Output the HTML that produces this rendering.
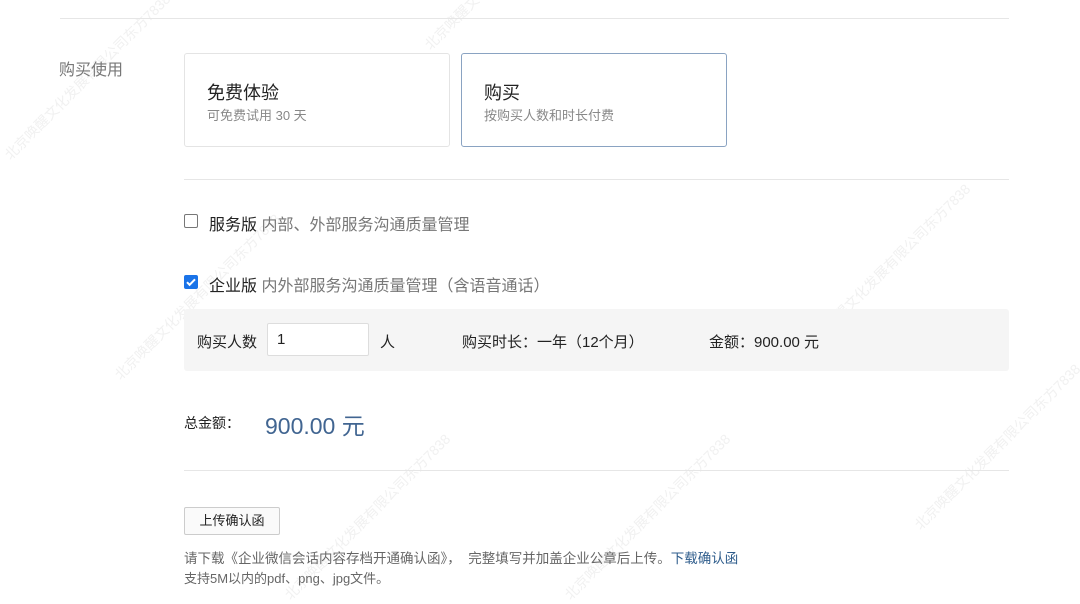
<!DOCTYPE html>
<html><head><meta charset="utf-8"><style>
*{margin:0;padding:0;box-sizing:border-box}
body{width:1080px;height:595px;background:#fff;position:relative;overflow:hidden;font-family:"Liberation Sans","Noto Sans CJK SC",sans-serif;color:#222}
.a{position:absolute;white-space:nowrap}
.hr{position:absolute;height:1px;background:#e6e6e6}
.card{position:absolute;border:1px solid #e4e4e4;border-radius:3px;background:#fff}
.wm{position:absolute;color:#f1f1f1;font-size:14px;transform:rotate(-45deg);transform-origin:left top;white-space:nowrap}
</style></head><body>
<div class="wm" style="left:420px;top:40px">北京唤醒文化发展有限公司东方7838</div>
<div class="wm" style="left:0px;top:150px">北京唤醒文化发展有限公司东方7838</div>
<div class="wm" style="left:110px;top:370px">北京唤醒文化发展有限公司东方7838</div>
<div class="wm" style="left:800px;top:340px">北京唤醒文化发展有限公司东方7838</div>
<div class="wm" style="left:280px;top:590px">北京唤醒文化发展有限公司东方7838</div>
<div class="wm" style="left:910px;top:520px">北京唤醒文化发展有限公司东方7838</div>
<div class="wm" style="left:560px;top:590px">北京唤醒文化发展有限公司东方7838</div>

<div class="hr" style="left:60px;top:18px;width:949px"></div>
<div class="a" style="left:59px;top:56px;font-size:16px;color:#777">购买使用</div>
<div class="card" style="left:184px;top:53px;width:266px;height:94px"></div>
<div class="a" style="left:207px;top:79px;font-size:18px;color:#222">免费体验</div>
<div class="a" style="left:207px;top:105px;font-size:13px;color:#888">可免费试用 30 天</div>
<div class="card" style="left:461px;top:53px;width:266px;height:94px;border-color:#8aa3c2"></div>
<div class="a" style="left:484px;top:79px;font-size:18px;color:#222">购买</div>
<div class="a" style="left:484px;top:105px;font-size:13px;color:#888">按购买人数和时长付费</div>

<div class="hr" style="left:184px;top:179px;width:825px"></div>

<div class="a" style="left:184px;top:214px;width:14px;height:14px;border:1px solid #777;border-radius:2px"></div>
<div class="a" style="left:209px;top:211px;font-size:16px;color:#222">服务版 <span style="color:#777">内部、外部服务沟通质量管理</span></div>

<div class="a" style="left:184px;top:275px;width:14px;height:14px;background:#1a73e8;border-radius:2px"><svg width="14" height="14" viewBox="0 0 14 14" style="position:absolute;left:0;top:0"><path d="M3 7.2l2.6 2.6L11 4.3" stroke="#fff" stroke-width="2" fill="none"/></svg></div>
<div class="a" style="left:209px;top:272px;font-size:16px;color:#222">企业版 <span style="color:#777">内外部服务沟通质量管理（含语音通话）</span></div>

<div class="a" style="left:184px;top:309px;width:825px;height:62px;background:#f5f5f5;border-radius:3px"></div>
<div class="a" style="left:197px;top:331px;font-size:15px">购买人数</div>
<div class="a" style="left:267px;top:323px;width:102px;height:33px;background:#fff;border:1px solid #ddd;border-radius:2px;font-size:15px;padding:7px 0 0 9px">1</div>
<div class="a" style="left:380px;top:331px;font-size:15px">人</div>
<div class="a" style="left:462px;top:331px;font-size:15px">购买时长：一年（12个月）</div>
<div class="a" style="left:709px;top:331px;font-size:15px">金额：900.00 元</div>

<div class="a" style="left:184px;top:413px;font-size:14px">总金额：</div>
<div class="a" style="left:265px;top:407px;font-size:23px;color:#416591">900.00 元</div>

<div class="hr" style="left:184px;top:470px;width:825px"></div>

<div class="a" style="left:184px;top:507px;width:96px;height:28px;border:1px solid #ccc;border-radius:2px;background:#fafafa;font-size:13px;text-align:center;line-height:26px">上传确认函</div>
<div class="a" style="left:184px;top:547px;font-size:13.5px;color:#666">请下载《企业微信会话内容存档开通确认函》，&nbsp;&nbsp;完整填写并加盖企业公章后上传。<span style="color:#2f5d8c">下载确认函</span></div>
<div class="a" style="left:184px;top:568px;font-size:13px;color:#666">支持5M以内的pdf、png、jpg文件。</div>
</body></html>
